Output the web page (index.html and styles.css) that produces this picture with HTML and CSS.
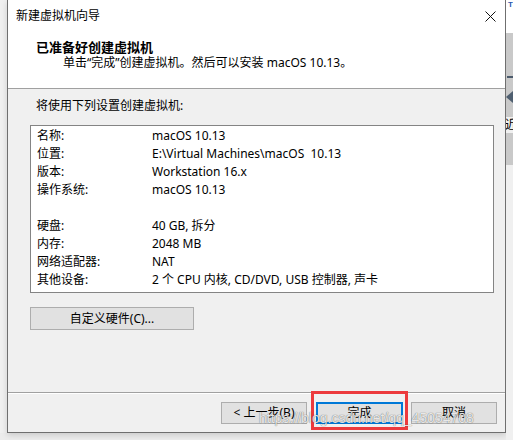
FILE: index.html
```html
<!DOCTYPE html>
<html lang="zh-CN">
<head>
<meta charset="utf-8">
<title>新建虚拟机向导</title>
<link rel="stylesheet" href="styles.css">
</head>
<body>
<div class="screen">
  <div class="left-gap"></div>
  <div class="dialog">
    <div class="header">
      <div class="titlebar">
        <span class="title">新建虚拟机向导</span>
        <svg class="close" width="11" height="11" viewBox="0 0 11 11"><path d="M0.5 0.5 L10.5 10.5 M10.5 0.5 L0.5 10.5" stroke="#111" stroke-width="1" fill="none"/></svg>
      </div>
      <div class="heading">已准备好创建虚拟机</div>
      <div class="subtitle">单击“完成”创建虚拟机。然后可以安装 macOS 10.13。</div>
    </div>
    <div class="panel">
      <div class="intro">将使用下列设置创建虚拟机:</div>
      <div class="listbox">
        <div class="row"><span class="k">名称:</span><span class="v">macOS 10.13</span></div>
        <div class="row"><span class="k">位置:</span><span class="v">E:\Virtual Machines\macOS&nbsp; 10.13</span></div>
        <div class="row"><span class="k">版本:</span><span class="v">Workstation 16.x</span></div>
        <div class="row"><span class="k">操作系统:</span><span class="v">macOS 10.13</span></div>
        <div class="row blank"></div>
        <div class="row"><span class="k">硬盘:</span><span class="v">40 GB, 拆分</span></div>
        <div class="row"><span class="k">内存:</span><span class="v">2048 MB</span></div>
        <div class="row"><span class="k">网络适配器:</span><span class="v">NAT</span></div>
        <div class="row"><span class="k">其他设备:</span><span class="v">2 个 CPU 内核, CD/DVD, USB 控制器, 声卡</span></div>
      </div>
      <div class="btn custom">自定义硬件(C)...</div>
    </div>
    <div class="footer">
      <div class="btn back">&lt; 上一步(B)</div>
      <div class="btn finish">完成<span class="mark"></span></div>
      <div class="btn cancel">取消</div>
    </div>
  </div>
  <div class="right-strip">
    <div class="rs-top"><span class="rs-t">T</span></div>
    <div class="rs-gray">
      <div class="rs-dash"></div>
      <div class="rs-arrow"></div>
      <div class="rs-char">近</div>
    </div>
    <div class="rs-rest"></div>
  </div>
  <span class="watermark">https://blog.csdn.net/qq_45054708</span>
</div>
</body>
</html>
```
FILE: styles.css
```css
* { box-sizing: border-box; }
html, body { margin: 0; padding: 0; }
body {
  background: #ececec;
  font-family: "Noto Sans", "Noto Sans CJK SC", sans-serif;
  font-size: 12px;
  color: #000;
}
.screen {
  position: relative;
  display: flex;
  width: 513px;
  height: 440px;
  overflow: hidden;
}
.left-gap {
  flex: 0 0 7px;
  height: 433px;
  background: #f0f0f0;
}
.dialog {
  flex: 0 0 499px;
  height: 433px;
  border-left: 1px solid #6f6f6f;
  border-right: 1px solid #6f6f6f;
  border-bottom: 1px solid #6f6f6f;
  background: #f0f0f0;
  box-shadow: 0 2px 6px rgba(0,0,0,0.15);
  display: flex;
  flex-direction: column;
}
.header {
  height: 89px;
  background: #fff;
  border-bottom: 1px solid #a0a0a0;
}
.titlebar {
  height: 32px;
  display: flex;
  align-items: center;
  justify-content: space-between;
  padding: 0 9px 0 8px;
  line-height: 16px;
}
.close { display: block; }
.heading {
  margin: 7px 0 0 28px;
  font-size: 13px;
  font-weight: bold;
  line-height: 16px;
}
.subtitle {
  margin-left: 55px;
  line-height: 16px;
}
.panel {
  height: 303px;
  padding: 9px 11px 0 22px;
}
.intro {
  margin-left: 6px;
  line-height: 16px;
}
.listbox {
  margin-top: 11px;
  height: 168px;
  background: #fff;
  border: 1px solid #848484;
  padding: 1px 0 0 6px;
}
.row {
  display: flex;
  height: 18px;
  line-height: 18px;
  white-space: nowrap;
}
.row .k { width: 115px; }
.btn {
  height: 22px;
  line-height: 20px;
  text-align: center;
  background: #e1e1e1;
  border: 1px solid #adadad;
}
.custom {
  margin-top: 14px;
  width: 164px;
  height: 23px;
  line-height: 21px;
}
.footer {
  flex: 1;
  border-top: 1px solid #a0a0a0;
  box-shadow: inset 0 1px 0 #ffffff;
  display: flex;
  justify-content: flex-end;
  align-items: flex-start;
  padding: 9px 8px 0 0;
}
.back { width: 86px; }
.finish {
  position: relative;
  width: 87px;
  margin-left: 9px;
  border: 2px solid #0078d7;
  line-height: 18px;
}
.cancel { width: 86px; margin-left: 8px; }
.mark {
  position: absolute;
  left: -7px;
  top: -13px;
  right: -7px;
  bottom: -8px;
  border: 3px solid #ec3a3d;
}
.right-strip {
  flex: 1 1 0;
  min-width: 0;
  overflow: hidden;
  display: flex;
  flex-direction: column;
  height: 440px;
}
.rs-top {
  height: 33px;
  background: #fff;
  position: relative;
}
.rs-t {
  display: block;
  margin: 1px 0 0 2px;
  font-family: "Liberation Sans", sans-serif;
  font-size: 8px;
  font-weight: bold;
  color: #2a58b0;
  line-height: 8px;
}
.rs-gray {
  height: 132px;
  background: #c9c9c9;
  padding-top: 43px;
}
.rs-dash {
  height: 2px;
  margin-left: 1px;
  background: #4b5a6b;
}
.rs-arrow {
  width: 0;
  height: 0;
  margin-top: 13px;
  border-top: 6px solid transparent;
  border-bottom: 6px solid transparent;
  border-right: 7px solid #4f5f70;
}
.rs-char {
  margin-top: 14px;
  margin-left: -1px;
  background: #f0f0f0;
  line-height: 16px;
  white-space: nowrap;
}
.rs-rest {
  flex: 1;
  background: #f0f0f0;
}
.watermark {
  position: absolute;
  left: 259px;
  top: 409px;
  font-family: "Liberation Sans", sans-serif;
  font-size: 14px;
  line-height: 18px;
  color: rgba(255,255,255,0.85);
  text-shadow: 0 0 1px rgba(0,0,0,0.45), 0 0 1px rgba(0,0,0,0.3);
  white-space: nowrap;
  pointer-events: none;
}
```
